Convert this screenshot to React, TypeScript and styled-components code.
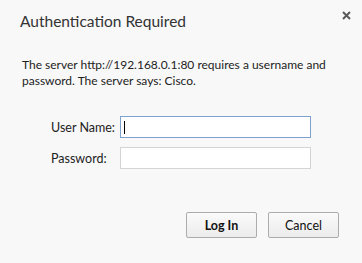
import React, { FC } from "react";
import styled, { createGlobalStyle } from "styled-components";

const FONT = `Lato, "Open Sans", "Liberation Sans", sans-serif`;

const GlobalStyle = createGlobalStyle`
  html, body {
    margin: 0;
    padding: 0;
    background: #f8f8f8;
  }
`;

const App: FC = () => {
  return (
    <Dialog>
      <GlobalStyle />
      <Header>
        <Title>Authentication Required</Title>
        <CloseButton aria-label="Close">
          <svg width="9" height="9" viewBox="0 0 9 9">
            <path d="M1 1 L8 8 M8 1 L1 8" stroke="#5a5a5a" strokeWidth="2" />
          </svg>
        </CloseButton>
      </Header>
      <Message>
        The server http://192.168.0.1:80 requires a username and password. The
        server says: Cisco.
      </Message>
      <Form>
        <Label htmlFor="user">User Name:</Label>
        <Field caret>
          <Input id="user" focused />
        </Field>
        <Label htmlFor="pass">Password:</Label>
        <Field>
          <Input id="pass" type="password" />
        </Field>
      </Form>
      <Buttons>
        <Button bold>Log In</Button>
        <Button>Cancel</Button>
      </Buttons>
    </Dialog>
  );
};

const Dialog = styled.div`
  width: 362px;
  height: 263px;
  box-sizing: border-box;
  background: #f8f8f8;
  font-family: ${FONT};
  color: #222;
  display: flex;
  flex-direction: column;
`;

const Header = styled.div`
  display: flex;
  align-items: flex-start;
  justify-content: space-between;
  padding: 10px 11px 0 20px;
`;

const Title = styled.div`
  font-size: 15.5px;
  line-height: 22px;
  color: #333;
`;

const CloseButton = styled.div`
  width: 9px;
  height: 9px;
  margin-top: 1px;
  display: flex;
`;

const Message = styled.div`
  width: 320px;
  margin: 25px 0 0 22px;
  font-size: 12px;
  line-height: 16px;
  color: #222;
`;

const Form = styled.div`
  display: grid;
  grid-template-columns: 69px 191px;
  row-gap: 9px;
  align-items: center;
  margin: 27px 0 0 51px;
`;

const Label = styled.label`
  font-size: 12.5px;
  color: #222;
`;

const Field = styled.div<{ caret?: boolean }>`
  position: relative;
  display: flex;

  &::after {
    content: "";
    display: ${(p) => (p.caret ? "block" : "none")};
    position: absolute;
    left: 4px;
    top: 5px;
    width: 1px;
    height: 13px;
    background: #000;
  }
`;

const Input = styled.input<{ focused?: boolean }>`
  box-sizing: border-box;
  width: 191px;
  height: 22px;
  margin: 0;
  padding: 0 3px;
  background: #fff;
  border: 1px solid ${(p) => (p.focused ? "#7ea2d0" : "#d4d4d4")};
  outline: none;
  font-family: ${FONT};
  font-size: 12px;
`;

const Buttons = styled.div`
  display: flex;
  justify-content: flex-end;
  gap: 11px;
  margin: 43px 23px 0 0;
`;

const Button = styled.button<{ bold?: boolean }>`
  box-sizing: border-box;
  width: 71px;
  height: 26px;
  margin: 0;
  padding: 0;
  border: 1px solid #acacac;
  border-radius: 2px;
  background: linear-gradient(#fafafa, #ececec);
  font-family: ${FONT};
  font-size: 12.5px;
  font-weight: ${(p) => (p.bold ? 700 : 400)};
  color: #111;
`;

export default App;
